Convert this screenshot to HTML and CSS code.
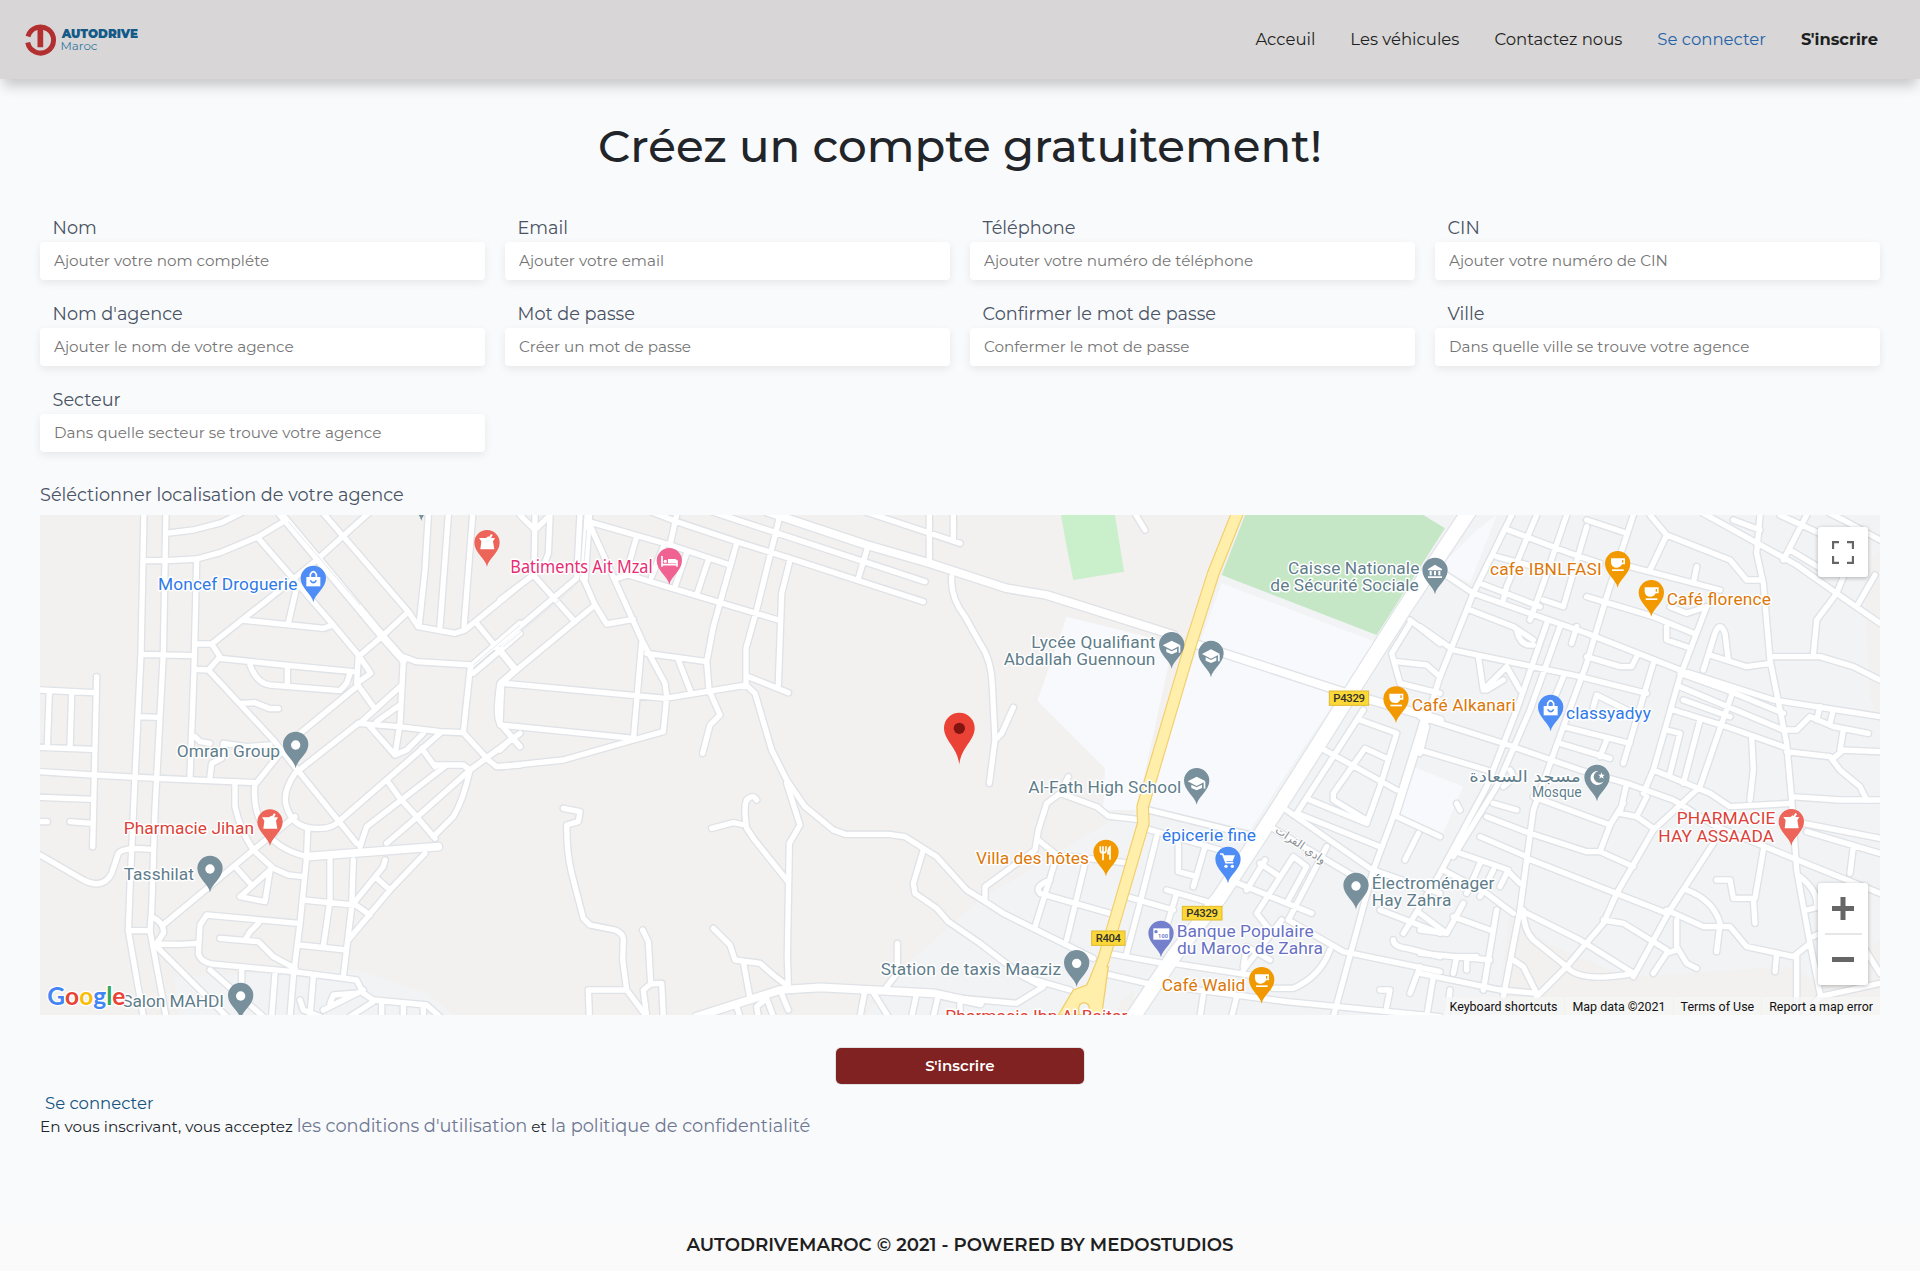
FILE: index.html
```html
<!DOCTYPE html>
<html lang="fr">
<head>
<meta charset="utf-8">
<title>AutoDrive Maroc - Inscription</title>
<link rel="stylesheet" href="styles.css">
</head>
<body>
<header class="topbar">
  <a class="brand" href="#" aria-label="Autodrive Maroc">
    <svg class="brand-logo" viewBox="0 0 120 40">
      <path d="M3 16.500A13 13 0 1 1 2.750 22.500" fill="none" stroke="#b23030" stroke-width="5"/>
      <path d="M5 12Q15.500 2.500 26 12Q22 10 18.200 10V27.300H12.500V10Q9 10 5 12Z" fill="#b23030"/>
      <text class="brand-name" x="36.700" y="18.200" textLength="76.300" lengthAdjust="spacingAndGlyphs">AUTODRIVE</text>
      <text class="brand-sub" x="35.500" y="30" textLength="37" lengthAdjust="spacingAndGlyphs">Maroc</text>
    </svg>
  </a>
  <nav class="menu">
    <a href="#">Acceuil</a>
    <a href="#">Les véhicules</a>
    <a href="#">Contactez nous</a>
    <a href="#" class="menu-login">Se connecter</a>
    <a href="#" class="menu-signup">S'inscrire</a>
  </nav>
</header>

<main class="page">
  <h1 class="title">Créez un compte gratuitement!</h1>
  <form class="signup">
    <div class="fields">
      <label class="field"><span>Nom</span><input placeholder="Ajouter votre nom compléte"></label>
      <label class="field"><span>Email</span><input placeholder="Ajouter votre email"></label>
      <label class="field"><span>Téléphone</span><input placeholder="Ajouter votre numéro de téléphone"></label>
      <label class="field"><span>CIN</span><input placeholder="Ajouter votre numéro de CIN"></label>
      <label class="field"><span>Nom d'agence</span><input placeholder="Ajouter le nom de votre agence"></label>
      <label class="field"><span>Mot de passe</span><input placeholder="Créer un mot de passe"></label>
      <label class="field"><span>Confirmer le mot de passe</span><input placeholder="Confermer le mot de passe"></label>
      <label class="field"><span>Ville</span><input placeholder="Dans quelle ville se trouve votre agence"></label>
      <label class="field"><span>Secteur</span><input placeholder="Dans quelle secteur se trouve votre agence"></label>
    </div>
    <p class="map-label">Séléctionner localisation de votre agence</p>
    <div class="map">
      <svg class="map-canvas" viewBox="0 15 5520 1500">
        <defs>
          <g id="roads">
            <path d="M312 0L303 430L285 800L270 1130L265 1262L310 1520M378 0L370 430L345 900L335 1200L330 1262L378 1520M470 150L462 480L450 800M378 70L460 60L545 38L620 0M312 152L378 152L470 147L540 128L655 80L725 38M303 433L462 437M295 620L355 622M470 402L515 402L720 240L830 150L985 10M850 10L1105 305L1135 350L1245 370L1275 360L1440 225M655 85L755 200L880 345L955 435L992 490L950 520M605 330L850 355L880 345M768 240L745 340M515 402L540 440L505 480L462 478M540 445L730 465L940 485M630 465Q650 520 690 525L900 542L920 520L930 490M742 470V525M505 480L700 690L950 1000M600 580L645 578L690 596L715 596M955 435L950 520L1000 590M955 440L1025 380L1100 310M960 640L1080 530M1010 635L1080 585M950 530L780 670M955 640L765 790Q725 850 740 890Q760 960 840 955Q870 955 890 940L1200 670"/>
            <path d="M1090 450L1080 640L1065 735M955 640L1075 650L1200 665L1270 668L1290 480L1295 465L1130 455L1090 440M990 650L1065 735L1100 720L1150 670M1290 470L1440 340M1300 490L1440 370M1310 340L1425 480L1380 520Q1365 620 1380 640L1440 710M1270 668L1345 750L1370 770L1440 765M1440 670L1290 780L1110 940L1040 1000M1290 780Q1270 870 1240 920L1180 980M1145 715L1185 770M1185 765L1270 765L1290 780M1220 765L980 950L960 1010M1040 810L1080 865L1130 920L1185 985M0 785L160 795L350 805L650 818L720 730M465 680L480 695L510 700M510 800L515 760L545 745L550 700L620 710L690 705M585 820V890Q600 960 640 1020L700 1075L745 1095L790 1100M645 820Q635 900 680 970Q720 1020 800 1040M803 960L800 1040L780 1240L760 1400L750 1520M765 920L640 1020L375 1240M590 1075L630 1120M690 1080L600 1160L675 1175L690 1080"/>
            <path d="M335 1220Q375 1240 370 1270L350 1300M265 1262H330M350 1302L420 1303L475 1300M350 1310L560 1520M775 1240L500 1215L480 1245L475 1330Q480 1355 515 1362L760 1385L950 1410L970 1450L1000 1470L1160 1485L1200 1520M540 1285L655 1295L700 1340L765 1375M655 1240L630 1265L615 1290M870 1050L870 1170L850 1310M790 1170L940 1185M775 1305L920 1320M1155 1030L1050 1140L925 1290M940 1050L935 1190L910 1400M1035 1050L1030 1070L945 1175M1005 1100L1050 1140M940 1180L990 1215M0 540L160 548M170 500L158 1010M28 545L22 705M95 550L90 715M0 712L155 718M0 862L155 868M0 935H22M90 935L155 940M0 1035L130 1110Q190 1140 215 1090L235 1030Q250 1010 335 1018M1165 15L1155 180L1138 340M1225 15L1200 350M1298 15L1272 350M510 1380L670 1520M605 1370V1420M705 1390L695 1520M820 1400L810 1520M780 1470L790 1500L840 1520M850 1500L970 1440M870 1480L880 1455L940 1450M930 1520L1000 1475M1025 1480V1520M1090 1480V1520M1150 1490V1520"/>
            <g transform="translate(1380 0)">
              <path d="M60 15L105 60L150 15M105 15L102 195M150 15L145 130L130 170M100 195L225 335M240 15L230 205L0 400M0 270L100 195M250 205L285 285L320 342L400 328M285 285L50 480L5 520L0 640M265 35L430 400L495 520L500 560L490 665L400 690L190 750L0 770M265 35L510 105L690 165M440 0L530 35L710 95L870 145L1270 275M620 0L1275 215M1080 0L1290 70L1380 100M1288 15V160M1360 15V90M530 15L510 105M410 80L390 150M490 110L455 200M560 130L525 230M625 150L590 255M350 205L385 195L500 230L835 330M710 100L640 350L620 455L627 540L660 615L630 645L608 730M840 15L770 300L738 415V525L765 550L815 720L860 810L915 890L1000 960L1035 973L1165 973L1215 980L1310 1040L1400 1140L1440 1165M870 150L845 250L835 525M745 500L865 548M740 525L495 565L10 520M0 645L400 685M425 400L400 690M440 430L620 455M535 450L570 540M1105 105L1075 205"/>
              <path d="M1355 200Q1350 260 1395 320L1440 400M190 895L240 905L235 935L200 945Q200 1030 215 1090L250 1225L270 1245L345 1260Q370 1270 370 1290L368 1350L380 1440L440 1520M268 1520L265 1440H380M428 1260L445 1295L452 1420M440 1520L430 1440L452 1422L485 1420L490 1520M635 955L700 938L735 945M770 870Q760 850 740 870Q730 890 740 955L760 985L860 1110M860 820L900 945L868 1000L862 1340L865 1430M640 1255L690 1305L705 1350L780 1360L820 1395L865 1430M730 1355L750 1465M840 1440L865 1500M775 1520L770 1490L800 1465L820 1520M710 1490L720 1520M1270 1020L1240 1120L1245 1150L1310 1195L1345 1235L1440 1300M1192 1300V1390L1160 1430M1095 1440L1080 1520M1115 1440L1165 1520M1250 1450L1235 1520M1315 1455L1300 1520M1380 1470V1520M0 420L50 480M0 640L60 710M0 720L30 690"/>
            </g>
            <g transform="translate(2760 0)">
              <path d="M60 400Q95 450 97 530L105 690L88 820M105 690L125 670L160 592M525 10L555 60M565 900L870 975M555 955L780 1020M325 800L300 850L410 890L445 918L530 928M300 850L260 880L235 960L225 1020L75 1130V1165M235 990L290 1035L495 1058M60 1165L130 1210L400 1345M60 1300L190 1400L330 1440M0 1465L170 1480L250 1430L190 1400M290 1040L225 1250M375 1060L320 1290M270 1110Q220 1130 240 1150L450 1210M590 980L540 1180L500 1330M500 1160L640 1200M445 1330L610 1360M430 1390L560 1420M655 1000V1085L710 1100M735 1010L700 1130M620 1140L740 1175M650 1150L610 1280M810 1110L1055 1210M915 1050L860 1140M1000 1040L890 1210L930 1260M900 1060L960 1100M1000 1040L1040 1070L980 1180M1100 1010L985 1230M965 890L1230 1075M930 950L1200 1110M985 1230L1150 1325L1440 1385M1085 715L1310 840M1210 600L1010 910M1200 630L1310 670L1260 830L1220 940L1050 870M1220 930L1120 870L1120 850L1215 715L1280 745"/>
              <path d="M1390 630L1300 920L1240 1080L1180 1300L1120 1520M1310 920L1440 980M1375 970L1335 1050M1350 330L1440 400M1350 340L1295 430L1320 520M1310 455L1400 465L1440 500M1320 520L1440 550M1260 1200L1440 1270M1240 1080L1440 1150M640 1360L900 1400M560 1420L980 1475L1440 1520M940 1435L1000 1435Q1080 1400 1110 1320M850 1370L860 1310L930 1350M1300 1290Q1300 1310 1340 1315L1440 1340M1260 1440L1290 1440L1280 1490M730 1455L720 1520M830 1460L815 1520M1380 1190L1330 1270M1380 1370L1350 1450M1010 910L1260 1010M965 1230L850 1380"/>
            </g>
            <g transform="translate(4140 0)">
              <path d="M275 15L160 250L60 500L-70 910M350 15L260 230L250 270M440 15L370 220L330 330M500 50L430 290L370 270M640 15L560 260L500 460L430 650L340 900L300 1200L250 1460M380 340L290 600L200 830L60 1090L0 1190M420 350L330 600L230 830L100 1040M430 500L380 620M700 460L610 760M860 290L780 500L700 780L670 850M840 630L790 820M940 540L840 830L700 960L590 1150M880 1000L750 1200L640 1400M70 190L160 250L500 370L780 480L1060 570L1380 620M150 300L280 350L340 390M0 350L100 420L480 500L680 550M265 60L450 130L540 160M230 140L380 180M180 220L360 290M500 30L620 70M500 260L700 320L820 370M630 170L900 240M780 530L1090 660M760 600L920 650L1090 710M780 490L920 540L1090 610M0 620L250 700L480 780L620 820L760 870L890 950L1120 1045L1380 1150M430 650L630 700M420 700L570 745M560 690L540 740M700 780L870 850L930 890L1115 880M1115 860L1260 870H1380M340 860L570 945M330 970L500 1025L540 1025L570 945L610 880M540 1025L640 1070M320 1045L740 1210M300 1200L480 1290L640 1390M620 820L600 910L650 920L700 955M650 920L680 860"/>
              <path d="M1020 15L1010 130L1030 220L1050 450L1100 700L1115 870L1130 1080L1170 1300L1200 1450M850 10L1130 165L1250 250L1380 340M690 15L740 75L930 150L980 210H1025M740 75L690 180M820 220L830 170M750 290L800 310L860 290M940 30L1020 60M1080 15L1220 80M1160 15L1090 150M1230 10L1270 30L1380 90M1110 120L1210 180M1270 200L1250 250L1190 330L1180 435M1365 195L1310 290M1050 440L1200 440L1300 470L1380 510M870 435L980 470L1050 460M850 480L885 370Q900 330 915 370L925 450M1090 660H1130L1170 620L1240 650L1345 670M1200 590L1190 630M1240 600L1230 640M1270 660L1260 720L1380 725M1100 725L1230 740L1260 780L1320 830L1340 870M1240 745L1270 720M995 680L1000 780L990 870M1150 940L1380 985M1160 965L1380 1030M1300 1010L1290 1090M890 1110H930L940 1165H1000L1005 1240M1030 1020L1005 1165M800 1140Q880 1170 900 1240L890 1325M740 1200L850 1250H930L980 1310L1120 1340L1170 1300M1130 1340V1520M1070 1330L1065 1385M770 1230V1310L800 1360L830 1375M770 1320L740 1330L700 1390M550 1230L610 1240L740 1320M440 1370L490 1310L550 1240L590 1150M440 1370Q480 1420 640 1390M310 1200Q310 1260 340 1290L440 1370L350 1460M280 1350L310 1370L350 1450"/>
              <path d="M500 440L600 470L635 470L650 440M520 590L530 555L620 600M740 350V390L800 410M290 360Q300 410 340 405M455 400L470 350M175 440L190 540L260 470L300 540M200 540L250 510M740 660L780 670L750 790M0 730L20 650M0 720L200 780M180 980L320 1040M200 920L330 970M220 880L290 900M120 1030L265 1080L240 1130M70 1080L200 1150L280 1210M180 1060L140 1150M220 1080L180 1160M0 1210L80 1270L130 1180M0 1260L80 1270M100 1220L210 1260M0 1330L210 1350M0 1390L240 1440L350 1450M230 1200L190 1440M100 1390L110 1340L170 1340M140 1350V1380M40 1400L20 1520M90 1440L80 1520M1140 1100Q1190 1140 1190 1180M1160 1200L1240 1180M1180 1280L1280 1230M1330 1310L1380 1390M1380 1420L1200 1460L1150 1520M790 570L930 620M270 780Q290 800 250 830M260 1080L300 1120M120 900L110 880"/>
            </g>
          </g>
          <g id="avenues">
            <path d="M800 1040L1195 1010"/>
            <path d="M720 10L1028 380L1090 450"/>
            <path d="M1645 15L1632 205"/>
            <path d="M2180 5L2480 105L2670 160L2900 235L3020 255L3400 375M3470 403L3890 540L4200 630"/>
            <path d="M1970 1520L2220 1440L2340 1432L2680 1450L2820 1480"/>
          </g>
          <path id="boulevard" d="M4290 0L4090 300L3950 520L3850 680L3710 900L3540 1160L3400 1340L3280 1520"/>
          <path id="highway" d="M3592 10L3520 190L3450 410L3308 890L3310 940L3190 1350L3170 1400"/>
          <path id="pin" d="M0 0C-4-25-38-42-38-72A38 38 0 1 1 38-72C38-42 4-25 0 0Z"/>
          <g id="dot"><circle cy="-70" r="14" fill="#fff"/></g>
          <g id="cup" fill="#fff"><path d="M-20-88H22V-70H13Q8-60-2-60Q-18-60-20-75ZM13-83V-75H17V-83Z" fill-rule="evenodd"/><path d="M-17-55H18V-50H-17Z"/></g>
          <g id="mortar" fill="#fff"><path d="M-24-86H-3L4-91L9-86H24L18-76L22-52H-20L-17-76Z"/><path d="M3-84L12-98L17-95L10-82Z"/></g>
          <g id="bag"><path d="M-21-76H21V-48H-21Z" fill="#fff"/><path d="M-9-76V-84Q0-100 9-84V-76" fill="none" stroke="#fff" stroke-width="5"/><path d="M-9-66Q0-52 9-66" fill="none" stroke="#4c8bf5" stroke-width="5"/></g>
          <g id="cap" fill="#fff"><path d="M-27-70L0-84L27-70L0-56Z"/><path d="M-16-60L0-52L16-60V-50L0-43L-16-50Z"/><path d="M21-68H26V-48H21Z"/></g>
        </defs>

        <rect class="land" y="15" width="5520" height="1500"/>
        <g class="urban">
          <path d="M400 1400L950 1380L1160 1450L1240 1515H420Z"/>
          <path d="M3610 15H5520V1515H2480L2560 1400L2820 1170L3200 940L3290 900Z"/>
        </g>
        <g class="land">
          <path d="M4410 1200L4520 1300L4760 1400L5250 1370L5340 1420L5520 1290V1520H4370Z"/>
          <path d="M5470 180L5520 120V640L5490 560Z"/>
          <path d="M3240 1480L3280 1440V1515H3230Z"/>
        </g>
        <g class="campus">
          <path d="M3080 320L3400 400L3290 900H3190L3195 775L2992 572Z"/>
          <path d="M3545 220L4005 395L3760 760L3630 960L3330 890L3370 700Z"/>
          <path d="M4120 770L4270 830L4200 990L4070 910Z"/>
          <path d="M4310 60L4370 15L4290 220L4200 170Z"/>
        </g>
        <path class="park" d="M3615 15H4150L4215 55L4010 375L3545 195Z"/>
        <path class="park-light" d="M3063 15H3225L3252 185L3100 210L3080 110Z"/>

        <use class="edge edge-road" href="#roads"/>
        <use class="edge edge-avenue" href="#avenues"/>
        <use class="edge edge-boulevard" href="#boulevard"/>
        <use class="fill fill-road" href="#roads"/>
        <use class="fill fill-avenue" href="#avenues"/>
        <use class="fill fill-boulevard" href="#boulevard"/>
        <path class="median" d="M745 35L960 285M1640 60L1632 160M1600 235L1390 410M1440 345L1300 465"/>
        <use class="highway-edge" href="#highway"/>
        <path class="highway-flare" d="M3165 1370H3205L3185 1515H3055L3100 1440L3140 1425Z"/>
        <use class="highway-fill" href="#highway"/>
        <path d="M3118 1515Q3110 1480 3132 1478Q3155 1480 3145 1515Z" fill="#f1f3f5" stroke="#f3cf6b" stroke-width="4"/>

        <g class="shield">
          <rect x="3868" y="543" width="118" height="43"/><rect x="3427" y="1189" width="119" height="41"/><rect x="3155" y="1263" width="100" height="43"/>
          <text x="3880" y="577" textLength="95">P4329</text><text x="3439" y="1222" textLength="95">P4329</text><text x="3167" y="1297" textLength="76">R404</text>
        </g>

        <g transform="translate(0 2)">
          <g class="pin-place">
            <g transform="translate(767 773)"><use href="#pin"/><use href="#dot"/></g>
            <g transform="translate(510 1145)"><use href="#pin"/><use href="#dot"/></g>
            <g transform="translate(602 1526)"><use href="#pin"/><use href="#dot"/></g>
            <g transform="translate(1144 31)"><use href="#pin"/></g>
            <g transform="translate(3948 1196)"><use href="#pin"/><use href="#dot"/></g>
            <g transform="translate(3110 1428)"><use href="#pin"/><use href="#dot"/></g>
            <g transform="translate(3395 474)"><use href="#pin"/><use href="#cap"/></g>
            <g transform="translate(3513 500)"><use href="#pin"/><use href="#cap"/></g>
            <g transform="translate(3470 882)"><use href="#pin"/><use href="#cap"/></g>
            <g transform="translate(4185 251)"><use href="#pin"/><path d="M-21-76L0-89L21-76V-72H-21ZM-16-70H-10V-57H-16ZM-3-70H3V-57H-3ZM10-70H16V-57H10ZM-21-54H21V-49H-21Z" fill="#fff"/></g>
            <g transform="translate(4671 872)"><use href="#pin"/><path d="M4-91A21 21 0 1 0 20-60A18 18 0 1 1 4-91Z" fill="#fff"/><path d="M13-87L16-80L23-80L18-75L20-68L13-72L7-68L9-75L4-80L11-80Z" fill="#fff"/></g>
          </g>
          <g class="pin-shop">
            <g transform="translate(820 275)"><use href="#pin"/><use href="#bag"/></g>
            <g transform="translate(4532 662)"><use href="#pin"/><use href="#bag"/></g>
            <g transform="translate(3564 1118)"><use href="#pin"/><path d="M-24-88H-16L-6-62H16" fill="none" stroke="#fff" stroke-width="5"/><path d="M-14-84H21L14-67H-8Z" fill="#fff"/><circle cx="-6" cy="-51" r="5" fill="#fff"/><circle cx="13" cy="-51" r="5" fill="#fff"/></g>
          </g>
          <g class="pin-health">
            <g transform="translate(1341 168)"><use href="#pin"/><use href="#mortar"/></g>
            <g transform="translate(690 1006)"><use href="#pin"/><use href="#mortar"/></g>
            <g transform="translate(5254 1005)"><use href="#pin"/><use href="#mortar"/></g>
          </g>
          <g class="pin-food">
            <g transform="translate(4068 637)"><use href="#pin"/><use href="#cup"/></g>
            <g transform="translate(3665 1479)"><use href="#pin"/><use href="#cup"/></g>
            <g transform="translate(4733 231)"><use href="#pin"/><use href="#cup"/></g>
            <g transform="translate(4834 318)"><use href="#pin"/><use href="#cup"/></g>
            <g transform="translate(3198 1097)"><use href="#pin"/><path d="M-17-90V-78Q-17-70-9-70Q0-70 0-78V-90M-9-90V-48M12-50V-88Q6-84 6-68H12" fill="none" stroke="#fff" stroke-width="5"/></g>
          </g>
          <g class="pin-hotel" transform="translate(1888 222)"><use href="#pin"/><path d="M-22-86V-54M-22-60H23M23-54V-73" fill="none" stroke="#fff" stroke-width="5"/><circle cx="-12" cy="-70" r="5" fill="#fff"/><path d="M-4-77H16Q23-77 23-70V-64H-4Z" fill="#fff"/></g>
          <g class="pin-bank" transform="translate(3363 1340)"><use href="#pin"/><rect x="-23" y="-87" width="48" height="34" fill="#fff"/><circle cx="-15" cy="-77" r="5" fill="#7480cb"/><text class="note" x="-9" y="-58" textLength="30">100</text></g>
        </g>

        <g class="label place">
          <text x="410" y="740" textLength="310">Omran Group</text>
          <text x="251" y="1111" textLength="211">Tasshilat</text>
          <text x="247" y="1491" textLength="305">Salon MAHDI</text>
          <text x="3744" y="191" textLength="394">Caisse Nationale</text>
          <text x="3691" y="242" textLength="445">de Sécurité Sociale</text>
          <text x="2974" y="414" textLength="372">Lycée Qualifiant</text>
          <text x="2891" y="466" textLength="455">Abdallah Guennoun</text>
          <text x="2965" y="848" textLength="459">Al-Fath High School</text>
          <text x="2522" y="1394" textLength="541">Station de taxis Maaziz</text>
          <text x="3995" y="1136" textLength="368">Électroménager</text>
          <text x="3995" y="1187" textLength="239">Hay Zahra</text>
          <text class="arabic" x="4455" y="815" text-anchor="middle" textLength="335" lengthAdjust="spacingAndGlyphs">مسجد السعادة</text>
          <text class="small" x="4476" y="861" textLength="149">Mosque</text>
        </g>
        <text class="street" transform="translate(3776 1014) rotate(34)" text-anchor="middle" textLength="175" lengthAdjust="spacingAndGlyphs">وادي الفرات</text>
        <g class="label shop">
          <text x="354" y="241" textLength="418">Moncef Droguerie</text>
          <text x="3366" y="993" textLength="282">épicerie fine</text>
          <text x="4578" y="626" textLength="255">classyadyy</text>
        </g>
        <g class="label health">
          <text x="251" y="972" textLength="391">Pharmacie Jihan</text>
          <text x="4910" y="943" textLength="296">PHARMACIE</text>
          <text x="4855" y="995" textLength="347">HAY ASSAADA</text>
          <text x="2716" y="1537" textLength="546">Pharmacie Ibn Al Baitar</text>
        </g>
        <g class="label food">
          <text x="2808" y="1061" textLength="339">Villa des hôtes</text>
          <text x="3365" y="1443" textLength="251">Café Walid</text>
          <text x="4115" y="602" textLength="312">Café Alkanari</text>
          <text x="4350" y="195" textLength="335">cafe IBNLFASI</text>
          <text x="4880" y="284" textLength="313">Café florence</text>
        </g>
        <text class="label hotel" x="1411" y="188" textLength="427" lengthAdjust="spacingAndGlyphs">Batiments Ait Mzal</text>
        <g class="label bank">
          <text x="3410" y="1280" textLength="411">Banque Populaire</text>
          <text x="3411" y="1331" textLength="438">du Maroc de Zahra</text>
        </g>

        <g transform="translate(2758 764)"><path d="M0 0C-5-52-46-72-46-110A46 46 0 1 1 46-110C46-72 5-52 0 0Z" fill="#ea4335"/><circle cy="-109" r="17" fill="#811411"/></g>

        <text class="google" x="22" y="1485" textLength="234" lengthAdjust="spacingAndGlyphs"><tspan fill="#4285f4">G</tspan><tspan fill="#ea4335">o</tspan><tspan fill="#fbbc05">o</tspan><tspan fill="#4285f4">g</tspan><tspan fill="#34a853">l</tspan><tspan fill="#ea4335">e</tspan></text>
      </svg>
      <button type="button" class="ctl ctl-full" aria-label="Plein écran">
        <svg viewBox="0 0 22 23"><path d="M1 8V1H7M15 1H21V8M21 15V22H15M7 22H1V15" fill="none" stroke="#666" stroke-width="2.300"/></svg>
      </button>
      <div class="ctl ctl-zoom">
        <svg viewBox="0 0 22 23"><path d="M0 11.500H22M11 0V23" stroke="#666" stroke-width="5"/></svg>
        <span class="ctl-rule"></span>
        <svg viewBox="0 0 22 23"><path d="M0 11.500H22" stroke="#666" stroke-width="5"/></svg>
      </div>
      <div class="credits"><span>Keyboard shortcuts</span><span>Map data ©2021</span><span>Terms of Use</span><span>Report a map error</span></div>
    </div>
    <button type="button" class="submit">S'inscrire</button>
  </form>
  <a class="login" href="#">Se connecter</a>
  <p class="terms">En vous inscrivant, vous acceptez <a class="terms-use" href="#">les conditions d'utilisation</a> et <a class="terms-privacy" href="#">la politique de confidentialité</a></p>
</main>
<footer class="foot">AUTODRIVEMAROC © 2021 - POWERED BY MEDOSTUDIOS</footer>
</body>
</html>
```
FILE: styles.css
```css
* { box-sizing: border-box; }
body { margin: 0; background: #f9fafc; color: #212529; font-family: Montserrat, Inter, "Liberation Sans", sans-serif; font-size: 16.500px; font-weight: 450; min-height: 1271px; display: flex; flex-direction: column; }
a { text-decoration: none; color: inherit; }
p, h1 { margin: 0; }

.topbar { height: 79px; background: #d8d6d7; display: flex; align-items: center; justify-content: space-between; padding: 0 42px 0 25px; box-shadow: 0 10px 12px -3px rgba(0, 0, 0, .2); }
.brand { display: block; height: 40px; }
.brand-logo { display: block; width: 120px; height: 40px; overflow: visible; }
.brand-name { font-size: 11.500px; font-weight: 900; fill: #135a88; }
.brand-sub { font-size: 12px; font-weight: 400; fill: #3379a3; }
.menu { display: flex; gap: 35px; line-height: 24px; padding-bottom: 2px; color: #1d1f21; }
.menu-login { color: #2563a8; }
.menu-signup { font-size: 16.300px; font-weight: 700; }

.page { flex: 1; padding: 38px 40px 0; }
.title { text-align: center; font-size: 45.200px; font-weight: 500; line-height: 58px; }
.signup { display: flex; flex-direction: column; padding-top: 40px; }
.fields { display: grid; grid-template-columns: repeat(4, 1fr); gap: 21px 20px; }
.field { display: flex; flex-direction: column; height: 65px; }
.field span { height: 27px; line-height: 26px; padding-left: 12.500px; font-size: 17.700px; color: #495363; }
.field input { height: 38px; border: 0; border-radius: 4px; padding: 0 14px 1px; background: #fff; font: 450 15.200px Montserrat, Inter, sans-serif; box-shadow: 0 3px 8px rgba(0, 0, 0, .08); }
.field input::placeholder { color: #757575; }
.map-label { margin-top: 28px; height: 35px; line-height: 30px; font-size: 17.700px; color: #495363; }

.map { position: relative; height: 500px; overflow: hidden; }
.map-canvas { display: block; width: 1840px; height: 500px; }
.land { fill: #f2f1ef; }
.urban { fill: #f1f3f5; }
.campus { fill: #f8f9fc; }
.park { fill: #c5e7c5; }
.park-light { fill: #c9efcb; }
.edge, .fill, .highway-edge, .highway-fill { fill: none; stroke-linecap: round; stroke-linejoin: round; }
.edge { stroke: #dfe2e6; }
.fill { stroke: #fff; }
.edge-road { stroke-width: 24px; }
.fill-road { stroke-width: 16px; }
.edge-avenue { stroke-width: 31px; }
.fill-avenue { stroke-width: 23px; }
.edge-boulevard { stroke-width: 50px; }
.fill-boulevard { stroke-width: 43px; }
.median { fill: none; stroke: #e6e8eb; stroke-width: 3px; }
.highway-flare { fill: #ffefab; stroke: #f3cf6b; stroke-width: 4px; }
.highway-edge { stroke: #f3cf6b; stroke-width: 38px; }
.highway-fill { stroke: #ffefab; stroke-width: 31px; }
.shield rect { fill: #fbd737; stroke: #e0b92c; stroke-width: 3px; }
.shield text { font: 500 34px Roboto, sans-serif; fill: #33322c; }
.pin-place { fill: #78909c; }
.pin-shop { fill: #4f8df6; }
.pin-health { fill: #ed6459; }
.pin-food { fill: #f29900; }
.pin-hotel { fill: #f06292; }
.pin-bank { fill: #7480cb; }
.note { font: 700 17px Roboto, sans-serif; fill: #7480cb; }
.label { font: 400 52px Roboto, sans-serif; paint-order: stroke; stroke: #fff; stroke-width: 9px; stroke-linejoin: round; }
.place { fill: #607d8b; }
.shop { fill: #3079e8; }
.health { fill: #dc4238; }
.food { fill: #dc7809; }
.hotel { font-family: "Noto Sans", sans-serif; fill: #e72c74; }
.bank { fill: #6870c4; }
.small { font-size: 42px; }
.arabic { font-family: "DejaVu Sans", sans-serif; font-size: 48px; }
.street { font: 34px "DejaVu Sans", sans-serif; fill: #8b9096; paint-order: stroke; stroke: #fff; stroke-width: 6px; }
.google { font: 700 74px Lato, Inter, sans-serif; paint-order: stroke; stroke: #fff; stroke-width: 8px; }

.ctl { position: absolute; right: 12px; width: 50px; border: 0; border-radius: 3px; background: #fff; box-shadow: 0 1px 4px rgba(0, 0, 0, .28); display: flex; flex-direction: column; align-items: center; padding: 0; }
.ctl svg { width: 22px; height: 23px; }
.ctl-full { top: 12px; height: 50px; justify-content: center; }
.ctl-zoom { bottom: 30px; height: 102px; justify-content: space-between; padding: 14px 0; }
.ctl-rule { width: 37px; height: 2px; background: #e6e6e6; }
.credits { position: absolute; right: 0; bottom: 0; height: 18px; display: flex; gap: 1px; font: 12.450px/20px Roboto, sans-serif; color: #111; }
.credits span { padding: 0 7px; background: rgba(245, 245, 245, .75); }

.submit { align-self: center; margin-top: 33px; width: 248px; height: 36px; border: 0; border-radius: 5px; padding: 0 0 2px; background: #802222; color: #fff; font: 600 15px Montserrat, Inter, sans-serif; box-shadow: 0 0 0 1px #e0e2e6; }
.login { display: block; width: max-content; margin: 7px 0 0 5px; line-height: 24px; color: #145480; }
.terms { line-height: 22px; font-size: 15.250px; white-space: nowrap; }
.terms a { font-size: 17.800px; color: #6e7891; }
.foot { height: 49px; background: #fafafa; text-align: center; font-size: 18.200px; font-weight: 600; line-height: 46px; color: #1f1f1f; }
```
